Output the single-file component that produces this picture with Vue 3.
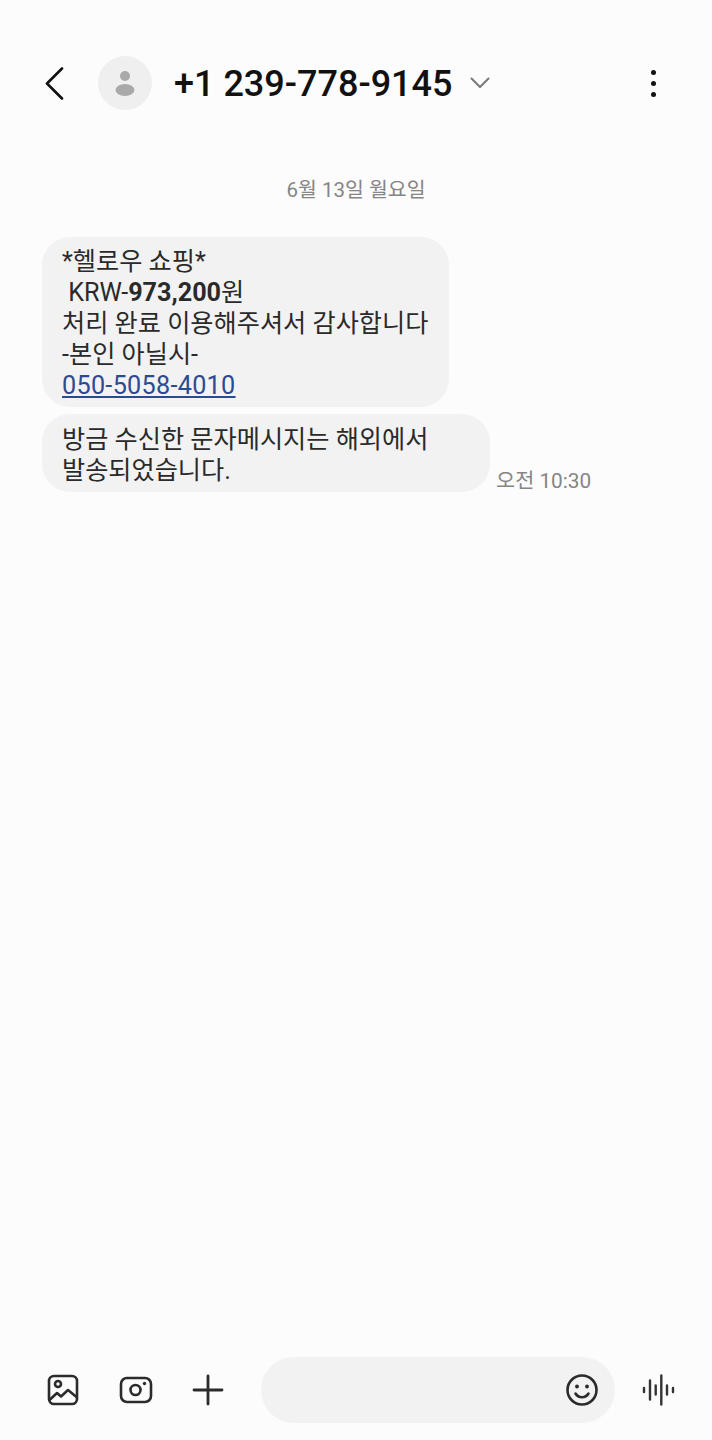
<script setup>
const title = '+1 239-778-9145'
</script>

<template>
  <div class="screen">
    <header class="topbar">
      <button class="icon back">
        <svg width="20" height="34" viewBox="0 0 20 34"><path d="M18 2.500 3 17.500l15 15" fill="none" stroke="#111" stroke-width="2.600" stroke-linecap="round" stroke-linejoin="round"/></svg>
      </button>
      <div class="avatar">
        <svg width="24" height="30" viewBox="0 0 24 30">
          <circle cx="12" cy="8" r="5" fill="#a9a9a9"/>
          <ellipse cx="12" cy="22" rx="9.500" ry="6" fill="#a9a9a9"/>
        </svg>
      </div>
      <h1 class="name">{{ title }}</h1>
      <svg class="caret" width="20" height="12" viewBox="0 0 20 12"><path d="M1.500 1.500 10 10l8.500-8.500" fill="none" stroke="#777" stroke-width="2" stroke-linecap="round" stroke-linejoin="round"/></svg>
      <div class="dots"><i></i><i></i><i></i></div>
    </header>

    <div class="date">6월 13일 월요일</div>

    <main class="thread">
      <div class="row">
        <div class="bubble first">
          *헬로우 쇼핑*<br>
          &nbsp;KRW-<b>973,200</b>원<br>
          처리 완료 이용해주셔서 감사합니다<br>
          -본인 아닐시-<br>
          <a class="link">050-5058-4010</a>
        </div>
      </div>
      <div class="row">
        <div class="bubble second">
          방금 수신한 문자메시지는 해외에서<br>
          발송되었습니다.
        </div>
        <span class="time">오전 10:30</span>
      </div>
    </main>

    <footer class="composer">
      <svg class="tool" width="34" height="34" viewBox="0 0 34 34" fill="none" stroke="#2b2b2b" stroke-width="2.600" stroke-linejoin="round" stroke-linecap="round">
        <rect x="3" y="3" width="28" height="28" rx="5"/>
        <circle cx="12" cy="11" r="3"/>
        <path d="M3.500 27 11 20l4 3.500 7-6.500 8.500 7"/>
      </svg>
      <svg class="tool cam" width="34" height="30" viewBox="0 0 34 30" fill="none" stroke="#2b2b2b" stroke-width="2.600">
        <rect x="2" y="3" width="30" height="24" rx="6"/>
        <circle cx="16.500" cy="15" r="5"/>
        <circle cx="25.500" cy="8.500" r="1.700" fill="#2b2b2b" stroke="none"/>
      </svg>
      <svg class="tool plus" width="32" height="32" viewBox="0 0 32 32" fill="none" stroke="#2b2b2b" stroke-width="2.800" stroke-linecap="round">
        <path d="M16 2v28M2 16h28"/>
      </svg>
      <div class="input">
        <svg width="34" height="34" viewBox="0 0 34 34" fill="none" stroke="#2b2b2b" stroke-width="2.600" stroke-linecap="round">
          <circle cx="17" cy="17" r="14.500"/>
          <circle cx="12" cy="13.500" r="1.900" fill="#2b2b2b" stroke="none"/>
          <circle cx="22" cy="13.500" r="1.900" fill="#2b2b2b" stroke="none"/>
          <path d="M10.500 20.500c3 5 10 5 13 0"/>
        </svg>
      </div>
      <svg class="tool wave" width="34" height="32" viewBox="0 0 34 32" fill="none" stroke="#333" stroke-width="2.400" stroke-linecap="round">
        <path d="M2 14v4M8 6.500v19M13.700 11.500v9M19.300 1.500v29M25 11.500v9M31 14v4"/>
      </svg>
    </footer>
  </div>
</template>

<style>
body {
  background: #fcfcfc;
}
</style>

<style scoped>
.screen {
  height: 1440px;
  display: flex;
  flex-direction: column;
  background: #fcfcfc;
  font-family: Roboto, "Noto Sans CJK KR", sans-serif;
  color: #222;
}

.topbar {
  display: flex;
  align-items: center;
  height: 54px;
  margin-top: 56px;
  padding-left: 44px;
  padding-right: 56px;
}

.icon {
  border: none;
  background: none;
  padding: 0;
  display: flex;
}

.avatar {
  width: 54px;
  height: 54px;
  border-radius: 50%;
  background: #efefef;
  margin-left: 34px;
  display: flex;
  align-items: center;
  justify-content: center;
}

.name {
  margin: 2px 0 0 22px;
  font-size: 36px;
  font-weight: 500;
  color: #111;
}

.caret {
  margin-left: 18px;
}

.dots {
  margin-left: auto;
  display: flex;
  flex-direction: column;
  gap: 6px;
}

.dots i {
  width: 5px;
  height: 5px;
  border-radius: 50%;
  background: #111;
}

.date {
  margin-top: 67px;
  text-align: center;
  font-size: 20.500px;
  line-height: 26px;
  color: #858585;
}

.thread {
  margin-top: 34px;
  padding-left: 42px;
  display: flex;
  flex-direction: column;
  gap: 7px;
  flex: 1;
}

.row {
  display: flex;
  align-items: flex-end;
}

.bubble {
  background: #f2f2f2;
  border-radius: 28px;
  font-size: 25.200px;
  line-height: 31px;
  color: #2a2a2a;
  white-space: nowrap;
  box-sizing: border-box;
}

.first {
  width: 407px;
  padding: 9px 20px 6px;
}

.second {
  width: 448px;
  padding: 10px 20px 6px;
}

.bubble b {
  font-weight: 700;
}

.link {
  color: #2c4a94;
  text-decoration: underline;
  letter-spacing: 0.300px;
}

.time {
  margin-left: 6px;
  margin-bottom: -2px;
  font-size: 20.800px;
  line-height: 26px;
  color: #858585;
}

.composer {
  display: flex;
  align-items: center;
  height: 66px;
  margin-bottom: 17px;
  padding-left: 46px;
}

.cam {
  margin-left: 39px;
}

.plus {
  margin-left: 39px;
}

.input {
  width: 354px;
  height: 66px;
  margin-left: 37px;
  border-radius: 33px;
  background: #f2f2f2;
  display: flex;
  align-items: center;
  justify-content: flex-end;
  padding-right: 16px;
  box-sizing: border-box;
}

.wave {
  margin-left: 27px;
}
</style>
